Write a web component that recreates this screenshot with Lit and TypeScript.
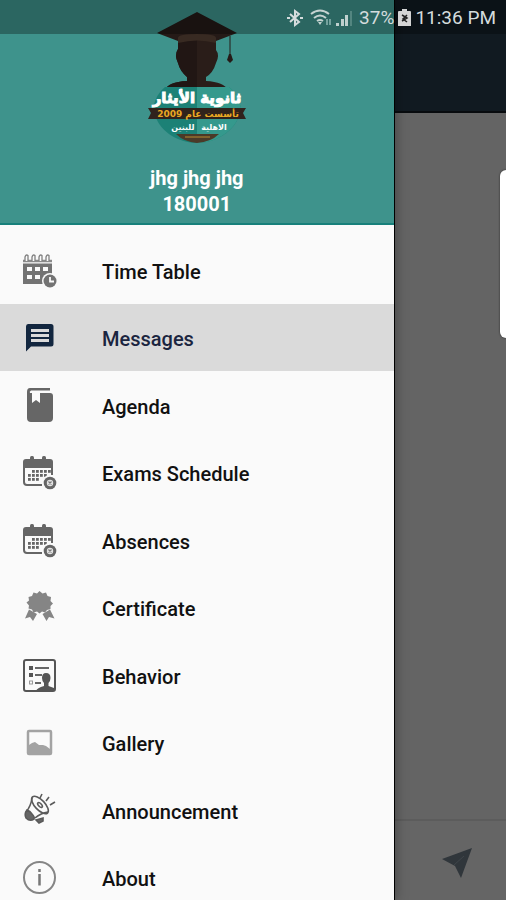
import { LitElement, html, svg, css } from "lit";
import { customElement, property, state } from "lit/decorators.js";
import { classMap } from "lit/directives/class-map.js";

const dots = (list: number[][], size: number) =>
  list.map(([x, y]) => svg`<rect x=${x} y=${y} width=${size} height=${size} />`);

const calendar = svg`
  <g fill="#666">
    <rect x="8" y="1" width="4" height="6" rx="1.500" />
    <rect x="20" y="1" width="4" height="6" rx="1.500" />
    <path d="M4 4H28Q31 4 31 7V13H1V7Q1 4 4 4Z" />
    <path d="M2 12V27Q2 30 5 30H20M30 12V20" fill="none" stroke="#666" stroke-width="2" />
    ${dots([[10, 15], [14, 15], [18, 15], [22, 15], [26, 15], [6, 19], [10, 19], [14, 19], [18, 19], [22, 19], [6, 23], [10, 23], [14, 23]], 2.8)}
    <circle cx="28" cy="28" r="8" fill="#fafafa" />
    <circle cx="28" cy="28" r="6.300" />
    <circle cx="28" cy="28" r="3.200" fill="#e4e4e4" />
    <path d="M26.500 26.500L29.500 29.500M29.500 26.500L26.500 29.500" stroke="#777" stroke-width="1.200" />
  </g>`;

const icons: Record<string, unknown> = {
  timetable: svg`
    <g fill="#737373">
      <path d="M1 10.500H30V31H1Z" />
      <path d="M1 8H30" stroke="#8a8a8a" stroke-width="2.500" />
      <path d="M3 8V4Q4 1 6 2.500V8M10 8V4Q11 1 13 2.500V8M17 8V4Q18 1 20 2.500V8M24 8V4Q25 1 27 2.500V8" fill="#fafafa" stroke="#808080" stroke-width="1.300" />
      <g fill="#fafafa">
        <rect x="5" y="14" width="5" height="4" /><rect x="13" y="14" width="5" height="4" /><rect x="21" y="14" width="5" height="4" />
        <rect x="5" y="22" width="5" height="4" /><rect x="13" y="22" width="5" height="4" />
        <circle cx="28" cy="28" r="8" />
      </g>
      <circle cx="28" cy="28" r="6.500" />
      <path d="M28 24V28.500H32" fill="none" stroke="#fafafa" stroke-width="1.800" />
    </g>`,
  messages: svg`
    <path fill="#12263f" d="M6 4H29Q31.500 4 31.500 6.500V24Q31.500 26.500 29 26.500H9L4 31.500V6.500Q4 4 6 4Z" />
    <path d="M9 10.500H27M9 15.500H27M9 20.500H27" stroke="#dadada" stroke-width="3" />`,
  agenda: svg`
    <path fill="#666" d="M8 0H28V2.500H9Q7 3.500 8 5H10V15L14 12L18 15V5H28Q31 5 31 8V30Q31 34 27 34H9Q5 34 5 30V4Q5 0 8 0Z" />`,
  calendar,
  certificate: svg`
    <path fill="#858585" d="M17.500 1L20.500 3.500L24 2.500L25.500 6L29 7L28.500 11L31 13.500L28.500 16L28.500 19L25 20L23 22.500L20 21.500L17.500 23.500L15 21.500L11.500 22.500L10 19.500L6.500 18.500L7 15.500L4.500 12.500L7 10.500L6.500 7L10 6L11.500 2.500L15 3.500Z" />
    <path fill="#858585" d="M7 19.500L15 24L11 31L8 27L3 28.500ZM28 19.500L20.500 24L24.500 31L27 27L32.500 28.500Z" />`,
  behavior: svg`
    <rect x="2" y="2" width="31" height="31" rx="2" fill="none" stroke="#555" stroke-width="2" />
    <g fill="#555">
      <rect x="7" y="8" width="4" height="4" /><rect x="7" y="15" width="4" height="4" />
      <rect x="7.500" y="23" width="3" height="3" fill="none" stroke="#999" />
      <path d="M13 10H27M13 17H20M13 25H19" stroke="#666" stroke-width="1.800" />
      <path d="M24 15Q28.500 15 28.500 20Q28.500 23 26.500 25V28L32 30V33H14Q15 30 22 28V25Q20 23 20 20Q20 15 24 15Z" />
    </g>`,
  gallery: svg`
    <rect x="6" y="6" width="23" height="23" rx="1" fill="none" stroke="#a3a3a3" stroke-width="2.500" />
    <path fill="#a3a3a3" d="M7 28V20L10 18L13 17L17 20L21 20L24 21L28 24V28Z" />`,
  announcement: svg`
    <g fill="none" stroke="#5a5a5a" stroke-width="1.600">
      <ellipse cx="18" cy="12" rx="5" ry="11" transform="rotate(-43 18 12)" />
      <ellipse cx="18" cy="12" rx="1.500" ry="3" transform="rotate(-43 18 12)" />
      <path d="M10 5Q9 13 4 19M26 19Q19 20 13 25M18 5L20 1M24 8L27 4M28 12L33 9" />
      <path d="M5 17Q2 21 4 25Q8 29 12 26Q13 24 10 21Q8 18 5 17Z" fill="#666" />
      <path d="M14 27L21 25L21 28L17 30Z" fill="#666" />
    </g>`,
  about: svg`
    <circle cx="17.500" cy="17.500" r="15.500" fill="none" stroke="#858585" stroke-width="2" />
    <path d="M17.500 14V25.500M17.500 9V12" stroke="#777" stroke-width="2.500" />`,
};

@customElement("school-logo")
class SchoolLogo extends LitElement {
  static styles = css`
    :host { display: block; }
    svg { display: block; width: 102px; height: 134px; }
    text { font-family: "DejaVu Sans", "Noto Sans", sans-serif; font-weight: 700; text-anchor: middle; }
    .name { font-size: 15px; fill: #fff; stroke: #fff; stroke-width: 1px; }
    .since { font-size: 9px; fill: #eaa823; }
    .kind { font-size: 8px; fill: #fff; }
  `;
  render() {
    return html`
      <svg viewBox="146 10 102 134" role="img" aria-label="School logo">
        <path fill="#2a1d19" d="M178 40H216V50Q220 55 216 63Q213 73 206 77V81Q224 82 228 90H165Q168 82 187 81V77Q180 71 178 63Q174 55 178 49Z" />
        <path fill="#211614" d="M178 40H197V90H165Q168 82 187 81V77Q180 71 178 63Q174 55 178 49Z" />
        <path fill="#251a17" d="M197 12L237 33L216 41Q197 33 178 41L157 33Z" />
        <path fill="#382a22" d="M178 38Q178 34 197 34Q216 34 216 38V43Q197 38 178 43Z" />
        <path d="M230 36V56" stroke="#251a17" />
        <path fill="#251a17" d="M229 54H231L233 60L230 63L227 60Z" />
        <path fill="#1c8176" d="M165 87H229Q238 94 241 108Q238 129 216 139Q197 147 178 139Q157 130 153 108Q156 94 165 87Z" />
        <path fill="#35998d" d="M197 87H229Q238 94 241 108Q238 129 216 139Q207 143 197 143Z" />
        <path fill="#4b3a28" d="M176 134H219Q211 142 197 143Q184 142 176 134Z" />
        <path d="M185 137H210" stroke="#b78b32" />
        <path fill="#30221c" d="M148 108H246L243 113L246 119H148L151 113Z" />
        <text class="name" x="197" y="103" direction="rtl">ثانوية الأيثار</text>
        <text class="since" x="198" y="117" direction="rtl">تأسست عام 2009</text>
        <text class="kind" x="214" y="130" direction="rtl">الاهلية</text>
        <text class="kind" x="183" y="130" direction="rtl">للبنين</text>
      </svg>`;
  }
}

@customElement("status-bar")
class StatusBar extends LitElement {
  static styles = css`
    :host {
      display: flex; align-items: center; justify-content: flex-end; gap: 4px;
      height: 34px; padding: 2px 10px 0 0; box-sizing: border-box;
      background: rgba(0, 0, 0, 0.3); color: #d4dcdd;
      font: 400 19px/24px Roboto, sans-serif;
    }
    svg { display: block; height: 20px; }
    .bars { margin-right: 2px; }
  `;
  render() {
    return html`
      <svg width="20" height="20" viewBox="0 0 20 20" fill="none" stroke="#d4dcdd" stroke-width="2">
        <path d="M4 6L13 14L9 17V3L13 6L4 14M1 10H4M14 10H17" />
      </svg>
      <svg width="22" height="20" viewBox="0 0 22 20" fill="none" stroke="#c4d3d1" stroke-width="2">
        <path d="M1 6Q10 -1 19 6M4 10Q10 5 16 10M7 13Q10 11 13 13" /><path d="M8 14H12L10 17Z" fill="#c4d3d1" stroke="none" />
        <path d="M17 11V17M20 11V17" stroke="#74a29e" />
      </svg>
      <svg class="bars" width="17" height="20" viewBox="0 0 17 20">
        <path fill="#bfd0ce" d="M0 15H3V18H0ZM5 11H8V18H5ZM9 7H12V18H9Z" /><path fill="#538680" d="M14 3H16V18H14Z" />
      </svg>
      <span>37%</span>
      <svg width="13" height="20" viewBox="0 0 13 20">
        <path fill="#d4d4d4" d="M4 1H9V3H12Q13 3 13 4V18H0V4Q0 3 1 3H4Z" />
        <path d="M4 7L9 10L4 13M9 7L5 11L9 14" fill="none" stroke="#222" stroke-width="1.500" />
      </svg>
      <time>11:36 PM</time>`;
  }
}

@customElement("menu-item")
class MenuItem extends LitElement {
  @property() label = "";
  @property() icon = "";
  @property({ type: Boolean }) selected = false;
  static styles = css`
    :host { display: grid; }
    button {
      display: flex; align-items: center; gap: 44px; width: 100%;
      border: 0; margin: 0; padding: 2px 22px 0; background: none; color: #111;
      font: 500 20px/24px Roboto, sans-serif; text-align: left; cursor: pointer;
    }
    span { padding-top: 2px; }
    .selected { background: #dadada; color: #1b2540; }
    svg { display: block; flex: none; width: 36px; height: 36px; }
  `;
  render() {
    return html`
      <button class=${classMap({ selected: this.selected })} aria-current=${this.selected ? "page" : "false"}>
        <svg viewBox="0 0 36 36" aria-hidden="true">${icons[this.icon]}</svg>
        <span>${this.label}</span>
      </button>`;
  }
}

@customElement("app-root")
class AppRoot extends LitElement {
  @state() current = "Messages";
  items = [
    ["Time Table", "timetable"], ["Messages", "messages"], ["Agenda", "agenda"],
    ["Exams Schedule", "calendar"], ["Absences", "calendar"], ["Certificate", "certificate"],
    ["Behavior", "behavior"], ["Gallery", "gallery"], ["Announcement", "announcement"], ["About", "about"],
  ];
  static styles = css`
    :host { display: block; position: relative; height: 100vh; overflow: hidden; font-family: Roboto, sans-serif; }
    .page { display: flex; flex-direction: column; height: 100%; background: #646464; }
    .appbar { height: 113px; background: #111a21; border-bottom: 2px solid #080b0e; box-sizing: border-box; flex: none; }
    .thread { flex: 1; }
    .composer {
      display: flex; align-items: center; justify-content: flex-end; height: 81px; flex: none;
      padding: 4px 34px 0 0; box-sizing: border-box; border-top: 2px solid #5c5c5c; background: #656565;
    }
    .send { border: 0; padding: 0; background: none; display: block; }
    .send svg { display: block; width: 30px; height: 30px; }
    .handle {
      position: absolute; top: 170px; right: 0; width: 6px; height: 168px;
      background: #fff; border-radius: 6px 0 0 6px; box-shadow: 0 0 2px #222;
    }
    .drawer {
      position: absolute; inset: 0 auto 0 0; width: 78%; overflow: hidden;
      display: flex; flex-direction: column; background: #fafafa;
      border-right: 1px solid #000; box-sizing: border-box; box-shadow: 0 0 12px rgba(0, 0, 0, 0.35);
    }
    .profile {
      display: flex; flex-direction: column; align-items: center; flex: none;
      height: 225px; padding-top: 10px; box-sizing: border-box;
      background: #3e938c; border-bottom: 2px solid #17807b;
      color: #fff; font: 700 20px/26px Roboto, sans-serif; text-align: center;
    }
    .who { padding-top: 21px; }
    .menu { display: grid; grid-auto-rows: 1fr; flex: none; height: 675px; margin-top: 11px; }
    .status { position: absolute; inset: 0 0 auto 0; }
  `;
  render() {
    return html`
      <main class="page">
        <header class="appbar"></header>
        <section class="thread"></section>
        <footer class="composer">
          <button class="send" aria-label="Send">
            <svg viewBox="0 0 30 30"><path fill="#30363b" d="M0 11L30 0L19 30L13 18Z" /><path d="M12 17L22 8" stroke="#3f454a" /></svg>
          </button>
        </footer>
      </main>
      <aside class="drawer">
        <div class="profile">
          <school-logo></school-logo>
          <div class="who"><div>jhg jhg jhg</div><div>180001</div></div>
        </div>
        <nav class="menu">
          ${this.items.map(([label, icon]) => html`
            <menu-item .label=${label} .icon=${icon} .selected=${label === this.current}
              @click=${() => (this.current = label)}></menu-item>`)}
        </nav>
      </aside>
      <div class="handle"></div>
      <status-bar class="status"></status-bar>`;
  }
}
